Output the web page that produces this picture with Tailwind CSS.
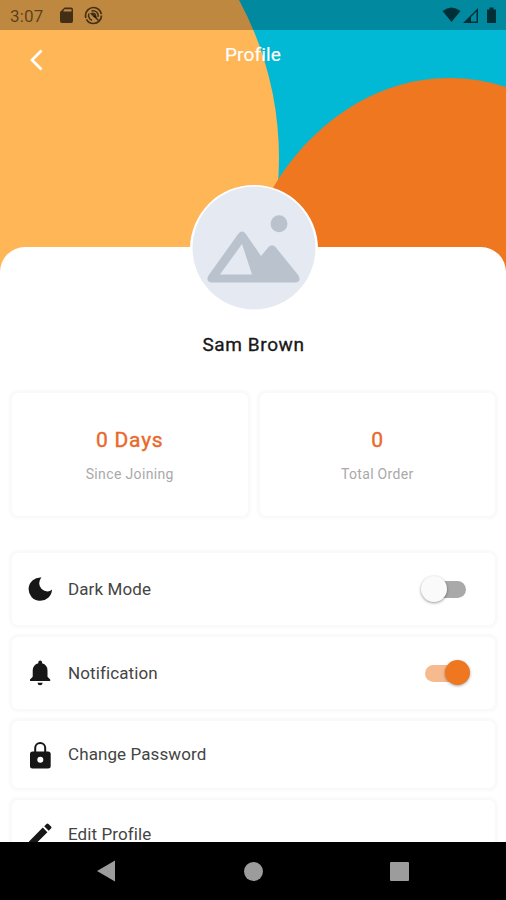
<!DOCTYPE html>
<html lang="en">
<head>
<meta charset="utf-8">
<title>Profile</title>
<script src="https://cdn.jsdelivr.net/npm/@tailwindcss/browser@4"></script>
</head>
<body class="bg-white">
<div class="relative isolate flex h-[900px] w-[506px] flex-col overflow-hidden bg-white font-['Roboto',sans-serif]">
  <svg class="absolute left-0 top-0 -z-10" width="506" height="290" viewBox="0 0 506 290">
    <rect width="506" height="290" fill="#02b9d5"/>
    <circle cx="-53" cy="158" r="332" fill="#ffb657"/>
    <path d="M230 290L270 193C308 125 375 78 449 78Q479 78 506 87V290Z" fill="#ee7720"/>
  </svg>
  <div class="flex h-[30px] shrink-0 items-center bg-black/25 pl-[10px] text-black/65">
    <span class="w-[49px] pt-[2px] text-[17px] leading-none tracking-[0.2px] text-black/55">3:07</span>
    <svg width="15" height="18" viewBox="0 0 15 18" fill="currentColor"><path fill-rule="evenodd" d="M5.500 1.500H12Q14 1.500 14 3.500V15Q14 17 12 17H3Q1 17 1 15V6ZM5.500 3.200L4.500 4.500V5.500H12.500V3.200Z"/></svg>
    <svg class="ml-[10px]" width="19" height="19" viewBox="0 0 19 19" fill="none" stroke="currentColor"><circle cx="9.500" cy="9.500" r="8" stroke-width="1.700" stroke-dasharray="21 1.500 26 1.800"/><path d="M8 14.300A5 5 0 0 1 5 7.500M7.500 5A5 5 0 0 1 14 11" stroke-width="1.500"/><path d="M6 7.500Q9 5.500 12 8L12.800 12L9.500 11Z" fill="currentColor" stroke="none"/><path d="M10 10L14.500 14.500" stroke-width="1.600"/></svg>
    <svg class="ml-auto" width="64" height="20" viewBox="0 0 64 20" fill="currentColor"><path d="M0.500 6Q9.500 -1 18.500 6L9.500 17Z"/><path fill-rule="evenodd" d="M21 18L36 3V18ZM29 16.500H34.500V6.500L29 12Z"/><path d="M45 4.500H47.500V2.500H51.500V4.500H54V18H45Z"/></svg>
  </div>
  <header class="grid h-[217px] shrink-0 grid-cols-[1fr_auto_1fr] items-start pt-[12px] text-white">
    <svg class="ml-[29px] mt-[7px]" width="15" height="22" viewBox="0 0 15 22" fill="none" stroke="currentColor" stroke-width="2.800"><path d="M12.500 1.500L3 11L12.500 20.500"/></svg>
    <h1 class="text-[19px] font-normal leading-[25px] tracking-[0.15px] [-webkit-text-stroke:0.15px]">Profile</h1>
  </header>
  <main class="flex min-h-0 flex-1 flex-col overflow-hidden rounded-t-[25px] bg-white pl-3 pr-[11px] pt-[84px]">
    <h2 class="shrink-0 text-center text-[19px] font-normal leading-[28px] tracking-[0.6px] text-[#181818] [-webkit-text-stroke:0.35px]">Sam Brown</h2>
    <section class="mt-[34px] grid h-[123px] shrink-0 grid-cols-2 gap-[12px] text-center">
      <div class="rounded-[6px] bg-white pt-[33px] shadow-[0_0_3px_3px_rgba(0,0,0,0.027)]">
        <p class="text-[21px] font-normal leading-[28px] tracking-[0.75px] text-[#e9692c] [-webkit-text-stroke:0.4px]">0 Days</p>
        <p class="mt-[10px] text-[14px] leading-[20px] tracking-[0.35px] text-[#a9a9a9]">Since Joining</p>
      </div>
      <div class="rounded-[6px] bg-white pt-[33px] shadow-[0_0_3px_3px_rgba(0,0,0,0.027)]">
        <p class="text-[21px] font-normal leading-[28px] text-[#e9692c] [-webkit-text-stroke:0.4px]">0</p>
        <p class="mt-[10px] text-[14px] leading-[20px] tracking-[0.3px] text-[#a9a9a9]">Total Order</p>
      </div>
    </section>
    <section class="mt-[37px] flex flex-col gap-[12px] text-[17px] tracking-[0.1px] text-[#444]">
      <div class="flex h-[72px] shrink-0 items-center rounded-[6px] bg-white pl-[16px] shadow-[0_0_3px_3px_rgba(0,0,0,0.027)]">
        <svg class="mr-[16px]" width="24" height="24" viewBox="0 0 24 24" fill="#171717"><path d="M13.400 0.500A11.700 11.700 0 1 0 24 12.500Q22 14.500 19.500 14.500A8.300 8.300 0 0 1 11.200 6.200Q11.200 3 13.400 .5Z"/></svg>
        <span class="pt-px">Dark Mode</span>
        <span class="relative ml-auto mr-[29px] h-[17px] w-[38px] rounded-full bg-[#a9a9a9]"><span class="absolute -left-[7px] -top-[5px] size-[26px] rounded-full bg-[#fafafa] shadow-[0_1px_3px_rgba(0,0,0,0.4)]"></span></span>
      </div>
      <div class="flex h-[72px] shrink-0 items-center rounded-[6px] bg-white pl-[16px] shadow-[0_0_3px_3px_rgba(0,0,0,0.027)]">
        <svg class="mr-[16px]" width="24" height="26" viewBox="0 0 24 26" fill="#171717"><path d="M2 21V19.500L4.700 16.800V10.500Q4.700 5 10.300 3.300V2.500A1.900 1.900 0 0 1 14.100 2.500V3.300Q19.500 5 19.500 10.500V16.800L22.200 19.500V21ZM9.500 22.700H14.700Q14.400 25.200 12.100 25.200T9.500 22.700Z"/></svg>
        <span class="pt-px">Notification</span>
        <span class="relative ml-auto mr-[29px] h-[17px] w-[41px] rounded-full bg-[#f7b98e]"><span class="absolute -right-[4px] -top-[5px] size-[25px] rounded-full bg-[#ee7720] shadow-[0_1px_3px_rgba(0,0,0,0.35)]"></span></span>
      </div>
      <div class="flex h-[67px] shrink-0 items-center rounded-[6px] bg-white pl-[16px] shadow-[0_0_3px_3px_rgba(0,0,0,0.027)]">
        <svg class="mr-[16px]" width="24" height="28" viewBox="0 0 24 28" fill="#171717"><path fill-rule="evenodd" d="M6.200 10.500V7A6 6 0 0 1 18.200 7V10.500H20Q22.700 10.500 22.700 13V25Q22.700 27.500 20 27.500H4.500Q2 27.500 2 25V13Q2 10.500 4.500 10.500ZM8.200 10.500H16.200V7A4 4 0 0 0 8.200 7ZM12.300 15.800A3 3 0 1 0 12.300 21.800A3 3 0 1 0 12.300 15.800Z"/></svg>
        <span>Change Password</span>
      </div>
      <div class="flex h-[70px] shrink-0 items-center rounded-[6px] bg-white pl-[16px] shadow-[0_0_3px_3px_rgba(0,0,0,0.027)]">
        <svg class="mr-[16px]" width="24" height="24" viewBox="0 0 24 24" fill="#171717"><path d="M1 18.500L14.800 4.600L19.400 9.200L5.600 23H1ZM16.200 3.300L18.500 1Q19.500 0 20.500 1L23 3.500Q24 4.500 23 5.500L20.700 7.800Z"/></svg>
        <span>Edit Profile</span>
      </div>
    </section>
  </main>
  <nav class="relative grid h-[58px] shrink-0 grid-cols-[107px_293px_106px] items-center bg-black">
    <svg class="-mr-[9px] justify-self-end" width="20" height="22" viewBox="0 0 20 22" fill="#9c9c9c"><path d="M1 11L19 0.500V21.500Z"/></svg>
    <span class="size-[19px] justify-self-center rounded-full bg-[#9c9c9c]"></span>
    <span class="-ml-[10px] size-[19px] rounded-[1px] bg-[#9c9c9c]"></span>
  </nav>
  <svg class="absolute left-[190px] top-[185px]" width="128" height="128" viewBox="0 0 128 128">
    <circle cx="64" cy="64" r="64" fill="#fff"/>
    <circle cx="64" cy="63" r="61.500" fill="#e5e9f2"/>
    <circle cx="89" cy="38.700" r="8.500" fill="#bac3cd"/>
    <path fill="#bac3cd" fill-rule="evenodd" d="M48.500 48.500Q52 44.500 55.500 48.500L71 71L78.500 62Q82 58.500 85.500 62L108.500 90.500Q111.500 96 106 97.500H21Q15.500 96 18.500 90.500ZM52 59L30 89.500H62Z"/>
  </svg>
</div>
</body>
</html>
